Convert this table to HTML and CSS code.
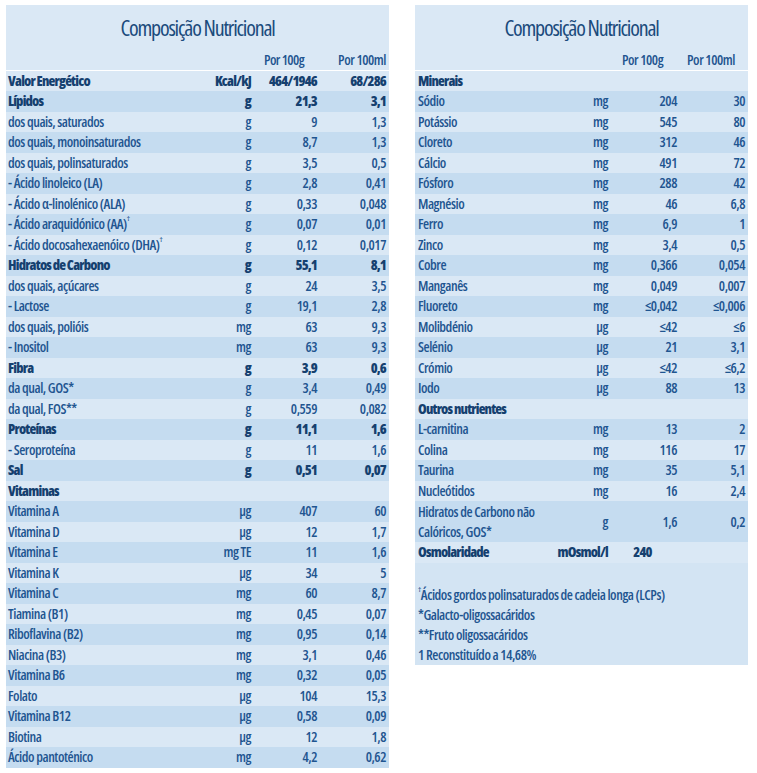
FILE: index.html
```html
<!DOCTYPE html>
<html lang="pt">
<head>
<meta charset="utf-8">
<title>Composição Nutricional</title>
<link rel="stylesheet" href="styles.css">
</head>
<body>
<div class="page">
  <section class="panel panel-left">
    <h2 class="title">Composição Nutricional</h2>
    <div class="row head"><span></span><span></span><span class="h100g">Por 100g</span><span class="h100ml">Por 100ml</span></div>
    <div class="rows">
      <div class="row bold"><span class="n">Valor Energético</span><span class="u">Kcal/kJ</span><span class="v">464/1946</span><span class="v">68/286</span></div>
      <div class="row bold"><span class="n">Lípidos</span><span class="u">g</span><span class="v">21,3</span><span class="v">3,1</span></div>
      <div class="row"><span class="n">dos quais, saturados</span><span class="u">g</span><span class="v">9</span><span class="v">1,3</span></div>
      <div class="row"><span class="n">dos quais, monoinsaturados</span><span class="u">g</span><span class="v">8,7</span><span class="v">1,3</span></div>
      <div class="row"><span class="n">dos quais, polinsaturados</span><span class="u">g</span><span class="v">3,5</span><span class="v">0,5</span></div>
      <div class="row"><span class="n">- Ácido linoleico (LA)</span><span class="u">g</span><span class="v">2,8</span><span class="v">0,41</span></div>
      <div class="row"><span class="n">- Ácido α-linolénico (ALA)</span><span class="u">g</span><span class="v">0,33</span><span class="v">0,048</span></div>
      <div class="row"><span class="n">- Ácido araquidónico (AA)<sup class="sup">†</sup></span><span class="u">g</span><span class="v">0,07</span><span class="v">0,01</span></div>
      <div class="row"><span class="n">- Ácido docosahexaenóico (DHA)<sup class="sup">†</sup></span><span class="u">g</span><span class="v">0,12</span><span class="v">0,017</span></div>
      <div class="row bold"><span class="n">Hidratos de Carbono</span><span class="u">g</span><span class="v">55,1</span><span class="v">8,1</span></div>
      <div class="row"><span class="n">dos quais, açúcares</span><span class="u">g</span><span class="v">24</span><span class="v">3,5</span></div>
      <div class="row"><span class="n">- Lactose</span><span class="u">g</span><span class="v">19,1</span><span class="v">2,8</span></div>
      <div class="row"><span class="n">dos quais, polióis</span><span class="u">mg</span><span class="v">63</span><span class="v">9,3</span></div>
      <div class="row"><span class="n">- Inositol</span><span class="u">mg</span><span class="v">63</span><span class="v">9,3</span></div>
      <div class="row bold"><span class="n">Fibra</span><span class="u">g</span><span class="v">3,9</span><span class="v">0,6</span></div>
      <div class="row"><span class="n">da qual, GOS*</span><span class="u">g</span><span class="v">3,4</span><span class="v">0,49</span></div>
      <div class="row"><span class="n">da qual, FOS**</span><span class="u">g</span><span class="v">0,559</span><span class="v">0,082</span></div>
      <div class="row bold"><span class="n">Proteínas</span><span class="u">g</span><span class="v">11,1</span><span class="v">1,6</span></div>
      <div class="row"><span class="n">- Seroproteína</span><span class="u">g</span><span class="v">11</span><span class="v">1,6</span></div>
      <div class="row bold"><span class="n">Sal</span><span class="u">g</span><span class="v">0,51</span><span class="v">0,07</span></div>
      <div class="row bold"><span class="n">Vitaminas</span><span class="u"></span><span class="v"></span><span class="v"></span></div>
      <div class="row"><span class="n">Vitamina A</span><span class="u">µg</span><span class="v">407</span><span class="v">60</span></div>
      <div class="row"><span class="n">Vitamina D</span><span class="u">µg</span><span class="v">12</span><span class="v">1,7</span></div>
      <div class="row"><span class="n">Vitamina E</span><span class="u">mg TE</span><span class="v">11</span><span class="v">1,6</span></div>
      <div class="row"><span class="n">Vitamina K</span><span class="u">µg</span><span class="v">34</span><span class="v">5</span></div>
      <div class="row"><span class="n">Vitamina C</span><span class="u">mg</span><span class="v">60</span><span class="v">8,7</span></div>
      <div class="row"><span class="n">Tiamina (B1)</span><span class="u">mg</span><span class="v">0,45</span><span class="v">0,07</span></div>
      <div class="row"><span class="n">Riboflavina (B2)</span><span class="u">mg</span><span class="v">0,95</span><span class="v">0,14</span></div>
      <div class="row"><span class="n">Niacina (B3)</span><span class="u">mg</span><span class="v">3,1</span><span class="v">0,46</span></div>
      <div class="row"><span class="n">Vitamina B6</span><span class="u">mg</span><span class="v">0,32</span><span class="v">0,05</span></div>
      <div class="row"><span class="n">Folato</span><span class="u">µg</span><span class="v">104</span><span class="v">15,3</span></div>
      <div class="row"><span class="n">Vitamina B12</span><span class="u">µg</span><span class="v">0,58</span><span class="v">0,09</span></div>
      <div class="row"><span class="n">Biotina</span><span class="u">µg</span><span class="v">12</span><span class="v">1,8</span></div>
      <div class="row"><span class="n">Ácido pantoténico</span><span class="u">mg</span><span class="v">4,2</span><span class="v">0,62</span></div>
    </div>
  </section>

  <section class="panel panel-right">
    <h2 class="title">Composição Nutricional</h2>
    <div class="row head"><span></span><span></span><span class="h100g">Por 100g</span><span class="h100ml">Por 100ml</span></div>
    <div class="rows">
      <div class="row bold"><span class="n">Minerais</span><span class="u"></span><span class="v"></span><span class="v"></span></div>
      <div class="row"><span class="n">Sódio</span><span class="u">mg</span><span class="v">204</span><span class="v">30</span></div>
      <div class="row"><span class="n">Potássio</span><span class="u">mg</span><span class="v">545</span><span class="v">80</span></div>
      <div class="row"><span class="n">Cloreto</span><span class="u">mg</span><span class="v">312</span><span class="v">46</span></div>
      <div class="row"><span class="n">Cálcio</span><span class="u">mg</span><span class="v">491</span><span class="v">72</span></div>
      <div class="row"><span class="n">Fósforo</span><span class="u">mg</span><span class="v">288</span><span class="v">42</span></div>
      <div class="row"><span class="n">Magnésio</span><span class="u">mg</span><span class="v">46</span><span class="v">6,8</span></div>
      <div class="row"><span class="n">Ferro</span><span class="u">mg</span><span class="v">6,9</span><span class="v">1</span></div>
      <div class="row"><span class="n">Zinco</span><span class="u">mg</span><span class="v">3,4</span><span class="v">0,5</span></div>
      <div class="row"><span class="n">Cobre</span><span class="u">mg</span><span class="v">0,366</span><span class="v">0,054</span></div>
      <div class="row"><span class="n">Manganês</span><span class="u">mg</span><span class="v">0,049</span><span class="v">0,007</span></div>
      <div class="row"><span class="n">Fluoreto</span><span class="u">mg</span><span class="v">≤0,042</span><span class="v">≤0,006</span></div>
      <div class="row"><span class="n">Molibdénio</span><span class="u">µg</span><span class="v">≤42</span><span class="v">≤6</span></div>
      <div class="row"><span class="n">Selénio</span><span class="u">µg</span><span class="v">21</span><span class="v">3,1</span></div>
      <div class="row"><span class="n">Crómio</span><span class="u">µg</span><span class="v">≤42</span><span class="v">≤6,2</span></div>
      <div class="row"><span class="n">Iodo</span><span class="u">µg</span><span class="v">88</span><span class="v">13</span></div>
      <div class="row bold"><span class="n">Outros nutrientes</span><span class="u"></span><span class="v"></span><span class="v"></span></div>
      <div class="row"><span class="n">L-carnitina</span><span class="u">mg</span><span class="v">13</span><span class="v">2</span></div>
      <div class="row"><span class="n">Colina</span><span class="u">mg</span><span class="v">116</span><span class="v">17</span></div>
      <div class="row"><span class="n">Taurina</span><span class="u">mg</span><span class="v">35</span><span class="v">5,1</span></div>
      <div class="row"><span class="n">Nucleótidos</span><span class="u">mg</span><span class="v">16</span><span class="v">2,4</span></div>
      <div class="row tall"><span class="n">Hidratos de Carbono não<br>Calóricos, GOS*</span><span class="u">g</span><span class="v">1,6</span><span class="v">0,2</span></div>
      <div class="row bold"><span class="n">Osmolaridade</span><span class="u">mOsmol/l</span><span class="v center">240</span><span class="v"></span></div>
    </div>
    <div class="notes">
      <p><sup class="sup">†</sup>Ácidos gordos polinsaturados de cadeia longa (LCPs)</p>
      <p>*Galacto-oligossacáridos</p>
      <p>**Fruto oligossacáridos</p>
      <p>1 Reconstituído a 14,68%</p>
    </div>
  </section>
</div>
</body>
</html>
```

FILE: styles.css
```css
html, body {
  margin: 0;
  padding: 0;
  background: #ffffff;
}

body {
  font-family: "Open Sans", "DejaVu Sans Condensed", sans-serif;
  font-stretch: 75%;
  font-size: 14px;
  font-weight: 600;
  letter-spacing: -0.45px;
  color: #1f5590;
}

.page {
  display: flex;
  align-items: flex-start;
  gap: 26px;
  padding: 5px 0 0 6px;
}

.panel {
  background: #dae8f5;
  display: flex;
  flex-direction: column;
}

.panel-left {
  width: 383px;
}

.panel-right {
  width: 333px;
}

.title {
  margin: 0;
  height: 45px;
  line-height: 45px;
  text-align: center;
  font-size: 22px;
  font-weight: 500;
  letter-spacing: -1.2px;
  color: #1b4b7c;
}

.row {
  display: grid;
  align-items: center;
  height: 20.5px;
  line-height: 20px;
  white-space: nowrap;
}

.panel-left .row {
  grid-template-columns: minmax(0, 1fr) 60px 66px 69px;
  padding: 0 3px 0 2px;
}

.panel-right .row {
  grid-template-columns: minmax(0, 1fr) 53px 69px 68px;
  padding: 0 3px 0 3px;
}

.row.head {
  height: 19.5px;
  border-bottom: 1.5px solid #ffffff;
  font-size: 14px;
  color: #1f5590;
}

.h100g {
  text-align: center;
}

.panel-left .h100g {
  letter-spacing: -0.6px;
}

.panel-left .h100ml {
  text-align: right;
}

.panel-right .h100ml {
  text-align: center;
}

.rows .row:nth-child(even) {
  background: #c5dcf0;
}

.row.bold {
  font-weight: 800;
  letter-spacing: -0.8px;
  color: #15406f;
}

.u {
  text-align: right;
}

.v {
  text-align: right;
}

.v.center {
  text-align: center;
}

.row.tall {
  height: 41px;
}

.row.tall .n {
  line-height: 20px;
}

.sup {
  font-size: 7px;
  vertical-align: top;
  line-height: 10px;
}

.notes {
  background: #d3e4f3;
  padding: 22px 3px 0 3px;
  height: 80px;
}

.notes p {
  margin: 0;
  height: 20px;
  line-height: 20px;
  white-space: nowrap;
}
```
